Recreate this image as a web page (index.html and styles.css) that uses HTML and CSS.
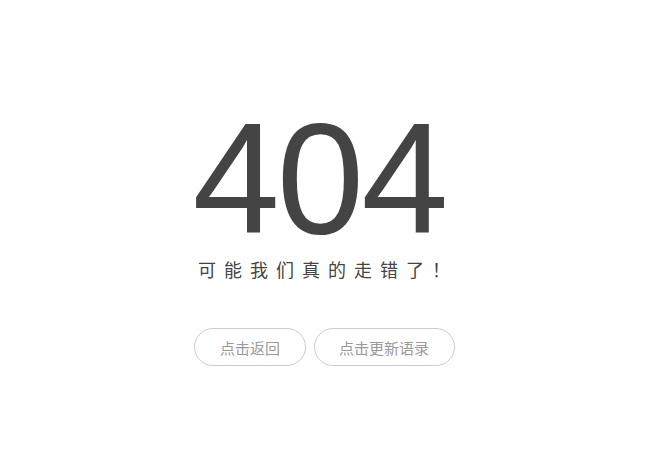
FILE: index.html
```html
<!DOCTYPE html>
<html lang="zh-CN">
<head>
<meta charset="utf-8">
<title>404</title>
<link rel="stylesheet" href="styles.css">
</head>
<body>
<main class="page">
  <div class="code">404</div>
  <p class="msg">可能我们真的走错了！</p>
  <div class="actions">
    <button class="btn">点击返回</button>
    <button class="btn">点击更新语录</button>
  </div>
</main>
</body>
</html>
```
FILE: styles.css
```css
html, body {
  margin: 0;
  padding: 0;
  background: #fff;
}
body {
  font-family: "Liberation Sans", "Noto Sans CJK SC", sans-serif;
}
.page {
  width: 649px;
  height: 461px;
  display: flex;
  flex-direction: column;
  align-items: center;
  box-sizing: border-box;
  padding-top: 119px;
}
.code {
  font-size: 157px;
  line-height: 120px;
  height: 120px;
  color: #444;
  letter-spacing: -3px;
  margin-left: -11px;
}
.msg {
  margin: 18px 0 0 0;
  font-size: 18px;
  line-height: 24px;
  letter-spacing: 8px;
  color: #444;
  font-family: "Noto Sans CJK SC", sans-serif;
  padding-left: 7px;
}
.actions {
  display: flex;
  gap: 8px;
  margin-top: 47px;
}
.btn {
  height: 38px;
  padding: 0 24.5px;
  border: 1px solid #ccc;
  border-radius: 19px;
  background: #fff;
  color: #999;
  font-size: 15px;
  font-family: "Noto Sans CJK SC", sans-serif;
  cursor: pointer;
}
```
